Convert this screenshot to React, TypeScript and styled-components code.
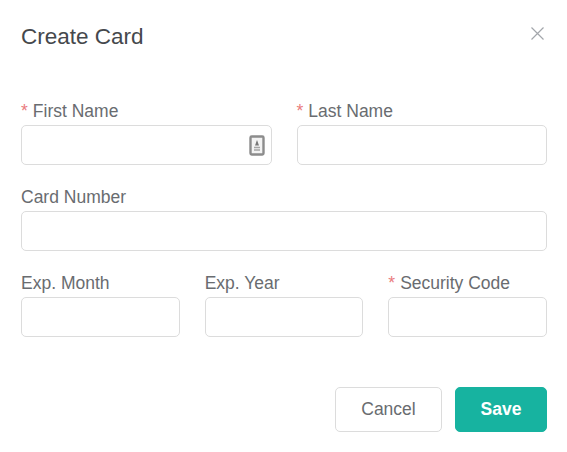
import React from "react";
import styled, { createGlobalStyle } from "styled-components";

const Global = createGlobalStyle`
  html, body { margin: 0; padding: 0; background: #fff; }
  body { font-family: "Liberation Sans", Arial, sans-serif; }
`;

const Dialog = styled.div`
  width: 567px;
  height: 452px;
  box-sizing: border-box;
  padding: 21px 20px 20px 21px;
  background: #fff;
  display: flex;
  flex-direction: column;
`;

const Header = styled.header`
  display: flex;
  justify-content: space-between;
  align-items: flex-start;
  height: 78px;
`;

const Title = styled.h2`
  margin: 0;
  font-size: 22.5px;
  line-height: 32px;
  font-weight: 400;
  color: #45484c;
`;

const CloseButton = styled.button`
  border: 0;
  background: none;
  padding: 0;
  margin: 5px 2px 0 0;
  width: 15px;
  height: 15px;
  display: flex;
  color: #a3a6ab;
`;

const Form = styled.form`
  display: flex;
  flex-direction: column;
`;

const Row = styled.div<{ $cols: number }>`
  display: grid;
  grid-template-columns: repeat(${(p) => p.$cols}, minmax(0, 1fr));
  column-gap: 25px;
`;

const Field = styled.div`
  display: flex;
  flex-direction: column;
  height: 86px;
`;

const Label = styled.label`
  height: 26px;
  line-height: 24px;
  font-size: 17.5px;
  color: #696c70;
  white-space: nowrap;
`;

const Required = styled.span`
  color: #ea7b7e;
  margin-right: 5px;
`;

const InputWrap = styled.div`
  position: relative;
  height: 40px;
`;

const Input = styled.input`
  width: 100%;
  height: 100%;
  box-sizing: border-box;
  border: 1px solid #dcdcdc;
  border-radius: 5px;
  background: #fff;
  outline: none;
  padding: 0 14px;
  font: inherit;
`;

const AutofillIcon = styled.svg`
  position: absolute;
  right: 7px;
  top: 10px;
  width: 16px;
  height: 21px;
`;

const Footer = styled.footer`
  display: flex;
  justify-content: flex-end;
  gap: 13px;
  margin-top: 30px;
`;

const Button = styled.button<{ $primary?: boolean }>`
  height: 45px;
  box-sizing: border-box;
  width: ${(p) => (p.$primary ? "92px" : "107px")};
  border-radius: 5px;
  border: 1px solid ${(p) => (p.$primary ? "#17b3a0" : "#dcdcdc")};
  background: ${(p) => (p.$primary ? "#17b3a0" : "#fff")};
  color: ${(p) => (p.$primary ? "#fff" : "#696c70")};
  font-family: inherit;
  font-size: 17.5px;
  font-weight: ${(p) => (p.$primary ? 700 : 400)};
  padding: 0;
`;

const Req = () => <Required>*</Required>;

export default function App() {
  return (
    <Dialog>
      <Global />
      <Header>
        <Title>Create Card</Title>
        <CloseButton type="button" aria-label="Close">
          <svg width="15" height="15" viewBox="0 0 15 15" fill="none" stroke="currentColor" strokeWidth="1.2">
            <path d="M1.5 1.5 13.5 13.5M13.5 1.5 1.5 13.5" />
          </svg>
        </CloseButton>
      </Header>
      <Form>
        <Row $cols={2}>
          <Field>
            <Label><Req />First Name</Label>
            <InputWrap>
              <Input />
              <AutofillIcon viewBox="0 0 16 21" fill="none">
                <rect x="1.5" y="1.5" width="13" height="18" rx="1.2" fill="#f3f3f3" stroke="#8c8c8c" strokeWidth="2.4" />
                <path d="M8 5 10 10.5H6Z" fill="#777" />
                <path d="M5 12.5h6M5 15h6" stroke="#a5a5a5" strokeWidth="1.4" />
              </AutofillIcon>
            </InputWrap>
          </Field>
          <Field>
            <Label><Req />Last Name</Label>
            <InputWrap><Input /></InputWrap>
          </Field>
        </Row>
        <Row $cols={1}>
          <Field>
            <Label>Card Number</Label>
            <InputWrap><Input /></InputWrap>
          </Field>
        </Row>
        <Row $cols={3}>
          <Field>
            <Label>Exp. Month</Label>
            <InputWrap><Input /></InputWrap>
          </Field>
          <Field>
            <Label>Exp. Year</Label>
            <InputWrap><Input /></InputWrap>
          </Field>
          <Field>
            <Label><Req />Security Code</Label>
            <InputWrap><Input /></InputWrap>
          </Field>
        </Row>
        <Footer>
          <Button type="button">Cancel</Button>
          <Button type="button" $primary>Save</Button>
        </Footer>
      </Form>
    </Dialog>
  );
}
